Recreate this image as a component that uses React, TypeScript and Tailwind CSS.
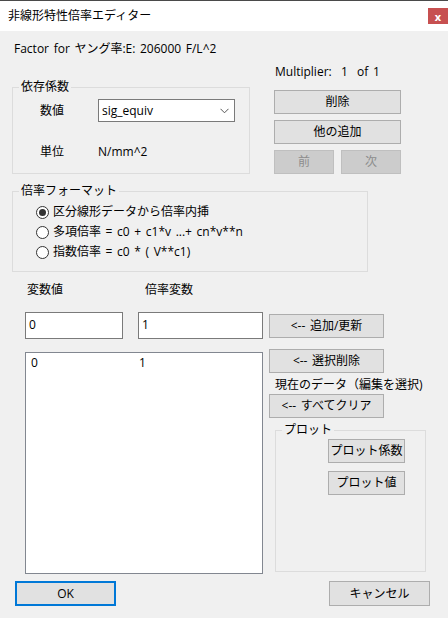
import type { ReactNode } from "react"

function Btn({ children, className = "", disabled = false }: { children: ReactNode; className?: string; disabled?: boolean }) {
  const look = disabled
    ? "bg-[#cccccc] border-[#bfbfbf] text-[#8d8d8d]"
    : "bg-[#e1e1e1] border-[#adadad] text-black"
  return (
    <div className={`h-[24px] flex items-center justify-center border ${look} ${className}`}>
      {children}
    </div>
  )
}

function Radio({ checked, children }: { checked?: boolean; children: ReactNode }) {
  return (
    <div className="h-[20px] flex items-center">
      <div className="w-[13px] h-[13px] rounded-full border border-[#333333] bg-white flex items-center justify-center">
        {checked && <div className="w-[7px] h-[7px] rounded-full bg-[#333333]" />}
      </div>
      <span className="ml-[4px] leading-[16px] whitespace-pre">{children}</span>
    </div>
  )
}

export default function App() {
  return (
    <div className="w-[448px] h-[618px] bg-[#f0f0f0] text-[12px] text-black font-['Open_Sans','Noto_Sans_CJK_JP',sans-serif] [word-spacing:1.5px] overflow-hidden">
      {/* Title bar */}
      <div className="h-[31px] bg-white border-t border-[#4a4a4a] flex items-center justify-between">
        <span className="ml-[8px] leading-[16px]">非線形特性倍率エディター</span>
        <div className="w-[20px] h-[16px] bg-[#c75050] text-white font-bold flex items-center justify-center leading-none text-[11px]">x</div>
      </div>

      <div className="pl-[14px] mt-[10px] leading-[16px]">Factor for ヤング率:E: 206000 F/L^2</div>

      {/* Dependent factor + multiplier buttons */}
      <div className="flex items-start mt-[7px]">
        <fieldset className="ml-[12px] mt-[15px] w-[238px] border border-[#dcdcdc]">
          <legend className="ml-[6px] px-[2px] leading-[16px]">依存係数</legend>
          <div className="pt-[4px] pb-[13px] pl-[27px]">
            <div className="flex items-center">
              <span className="w-[58px] leading-[16px]">数値</span>
              <div className="w-[137px] h-[23px] bg-white border border-[#7a7a7a] flex items-center justify-between pl-[3px] pr-[5px]">
                <span className="leading-[16px]">sig_equiv</span>
                <svg width="9" height="6" viewBox="0 0 9 6" fill="none" stroke="#555555" strokeWidth="1">
                  <polyline points="0.5,0.8 4.5,4.8 8.5,0.8" />
                </svg>
              </div>
            </div>
            <div className="flex items-center mt-[22px] leading-[16px]">
              <span className="w-[58px]">単位</span>
              <span>N/mm^2</span>
            </div>
          </div>
        </fieldset>

        <div className="ml-[24px] flex flex-col">
          <div className="leading-[16px] whitespace-pre pl-[1px]">Multiplier:  1  of 1</div>
          <Btn className="w-[127px] mt-[10px]">削除</Btn>
          <Btn className="w-[127px] mt-[6px]">他の追加</Btn>
          <div className="flex gap-[7px] mt-[6px]">
            <Btn disabled className="w-[60px]">前</Btn>
            <Btn disabled className="w-[60px]">次</Btn>
          </div>
        </div>
      </div>

      {/* Multiplier format */}
      <fieldset className="ml-[12px] mt-[9px] w-[356px] border border-[#dcdcdc]">
        <legend className="ml-[6px] px-[2px] leading-[16px]">倍率フォーマット</legend>
        <div className="pt-[3px] pb-[9px] pl-[23px]">
          <Radio checked>区分線形データから倍率内挿</Radio>
          <Radio>多項倍率 = c0 + c1*v ...+ cn*v**n</Radio>
          <Radio>指数倍率 = c0 * ( V**c1)</Radio>
        </div>
      </fieldset>

      <div className="flex mt-[10px] leading-[16px]">
        <span className="ml-[27px] w-[118px]">変数値</span>
        <span>倍率変数</span>
      </div>

      <div className="flex items-start mt-[14px]">
        <div className="ml-[25px] w-[238px] flex flex-col">
          <div className="flex gap-[15px]">
            <div className="w-[98px] h-[27px] bg-white border border-[#7a7a7a] pl-[3px] pt-[4px] leading-[16px]">0</div>
            <div className="w-[125px] h-[27px] bg-white border border-[#7a7a7a] pl-[3px] pt-[4px] leading-[16px]">1</div>
          </div>
          <div className="mt-[13px] h-[222px] bg-white border border-[#828790] pt-[2px]">
            <div className="flex leading-[16px]">
              <span className="ml-[5px] w-[108px]">0</span>
              <span>1</span>
            </div>
          </div>
        </div>

        <div className="ml-[6px] flex flex-col">
          <Btn className="w-[115px] mt-[2px]">&lt;-- 追加/更新</Btn>
          <Btn className="w-[115px] mt-[11px]">&lt;-- 選択削除</Btn>
          <div className="mt-[4px] ml-[6px] leading-[16px] whitespace-nowrap">現在のデータ（編集を選択)</div>
          <Btn className="w-[115px] mt-[1px]">&lt;-- すべてクリア</Btn>
          <fieldset className="ml-[6px] mt-[4px] w-[151px] h-[150px] border border-[#dcdcdc]">
            <legend className="ml-[6px] px-[2px] leading-[16px]">プロット</legend>
            <div className="pt-[1px] pl-[52px] flex flex-col gap-[8px]">
              <Btn className="w-[77px]">プロット係数</Btn>
              <Btn className="w-[77px]">プロット値</Btn>
            </div>
          </fieldset>
        </div>
      </div>

      {/* Footer buttons */}
      <div className="flex mt-[7px]">
        <div className="ml-[15px] w-[101px] h-[25px] border-2 border-[#0078d7] bg-[#e1e1e1] flex items-center justify-center">OK</div>
        <Btn className="ml-auto mr-[18px] w-[101px] h-[25px]">キャンセル</Btn>
      </div>
    </div>
  )
}
